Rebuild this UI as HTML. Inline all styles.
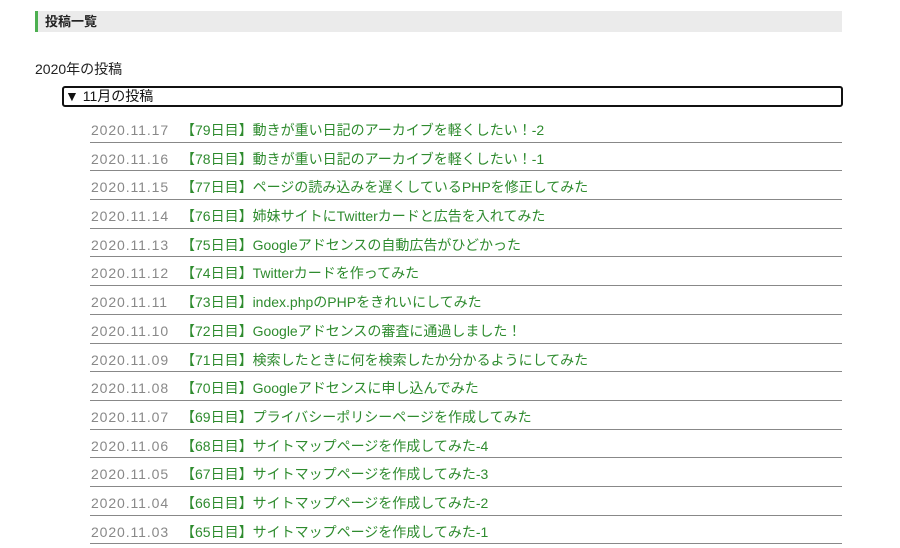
<!DOCTYPE html>
<html><head><meta charset="utf-8"><style>
body{margin:0;background:#fff;font-family:"Liberation Sans","Noto Sans CJK JP",sans-serif;width:900px;height:530px;overflow:hidden;position:relative}
.hd{position:absolute;left:35px;top:11px;height:21px;background:#ebebeb;border-left:3px solid #4caf50;font-size:13px;font-weight:bold;line-height:21px;padding-left:7px;box-sizing:border-box;width:807px;color:#222}
.yr{position:absolute;left:35px;top:59px;font-size:14px;color:#222}
.sm{position:absolute;left:62px;top:86px;width:781px;height:21px;border:2px solid #111;border-radius:3px;box-sizing:border-box;font-size:14px;line-height:17px;padding-left:1px;color:#111}
.list{position:absolute;left:90px;top:114px;width:752px}
.r{height:27.7px;border-bottom:1px solid #888;font-size:14px;line-height:32px;white-space:nowrap}
.d{color:#888;display:inline-block;width:90px;padding-left:1px;letter-spacing:0.9px}
.t{color:#2e8b2e}
</style></head><body>
<div class="hd">投稿一覧</div>
<div class="yr">2020年の投稿</div>
<div class="sm">▼ 11月の投稿</div>
<div class="list">
<div class="r"><span class="d">2020.11.17</span><span class="t">【79日目】動きが重い日記のアーカイブを軽くしたい！-2</span></div>
<div class="r"><span class="d">2020.11.16</span><span class="t">【78日目】動きが重い日記のアーカイブを軽くしたい！-1</span></div>
<div class="r"><span class="d">2020.11.15</span><span class="t">【77日目】ページの読み込みを遅くしているPHPを修正してみた</span></div>
<div class="r"><span class="d">2020.11.14</span><span class="t">【76日目】姉妹サイトにTwitterカードと広告を入れてみた</span></div>
<div class="r"><span class="d">2020.11.13</span><span class="t">【75日目】Googleアドセンスの自動広告がひどかった</span></div>
<div class="r"><span class="d">2020.11.12</span><span class="t">【74日目】Twitterカードを作ってみた</span></div>
<div class="r"><span class="d">2020.11.11</span><span class="t">【73日目】index.phpのPHPをきれいにしてみた</span></div>
<div class="r"><span class="d">2020.11.10</span><span class="t">【72日目】Googleアドセンスの審査に通過しました！</span></div>
<div class="r"><span class="d">2020.11.09</span><span class="t">【71日目】検索したときに何を検索したか分かるようにしてみた</span></div>
<div class="r"><span class="d">2020.11.08</span><span class="t">【70日目】Googleアドセンスに申し込んでみた</span></div>
<div class="r"><span class="d">2020.11.07</span><span class="t">【69日目】プライバシーポリシーページを作成してみた</span></div>
<div class="r"><span class="d">2020.11.06</span><span class="t">【68日目】サイトマップページを作成してみた-4</span></div>
<div class="r"><span class="d">2020.11.05</span><span class="t">【67日目】サイトマップページを作成してみた-3</span></div>
<div class="r"><span class="d">2020.11.04</span><span class="t">【66日目】サイトマップページを作成してみた-2</span></div>
<div class="r"><span class="d">2020.11.03</span><span class="t">【65日目】サイトマップページを作成してみた-1</span></div>
</div>
</body></html>
